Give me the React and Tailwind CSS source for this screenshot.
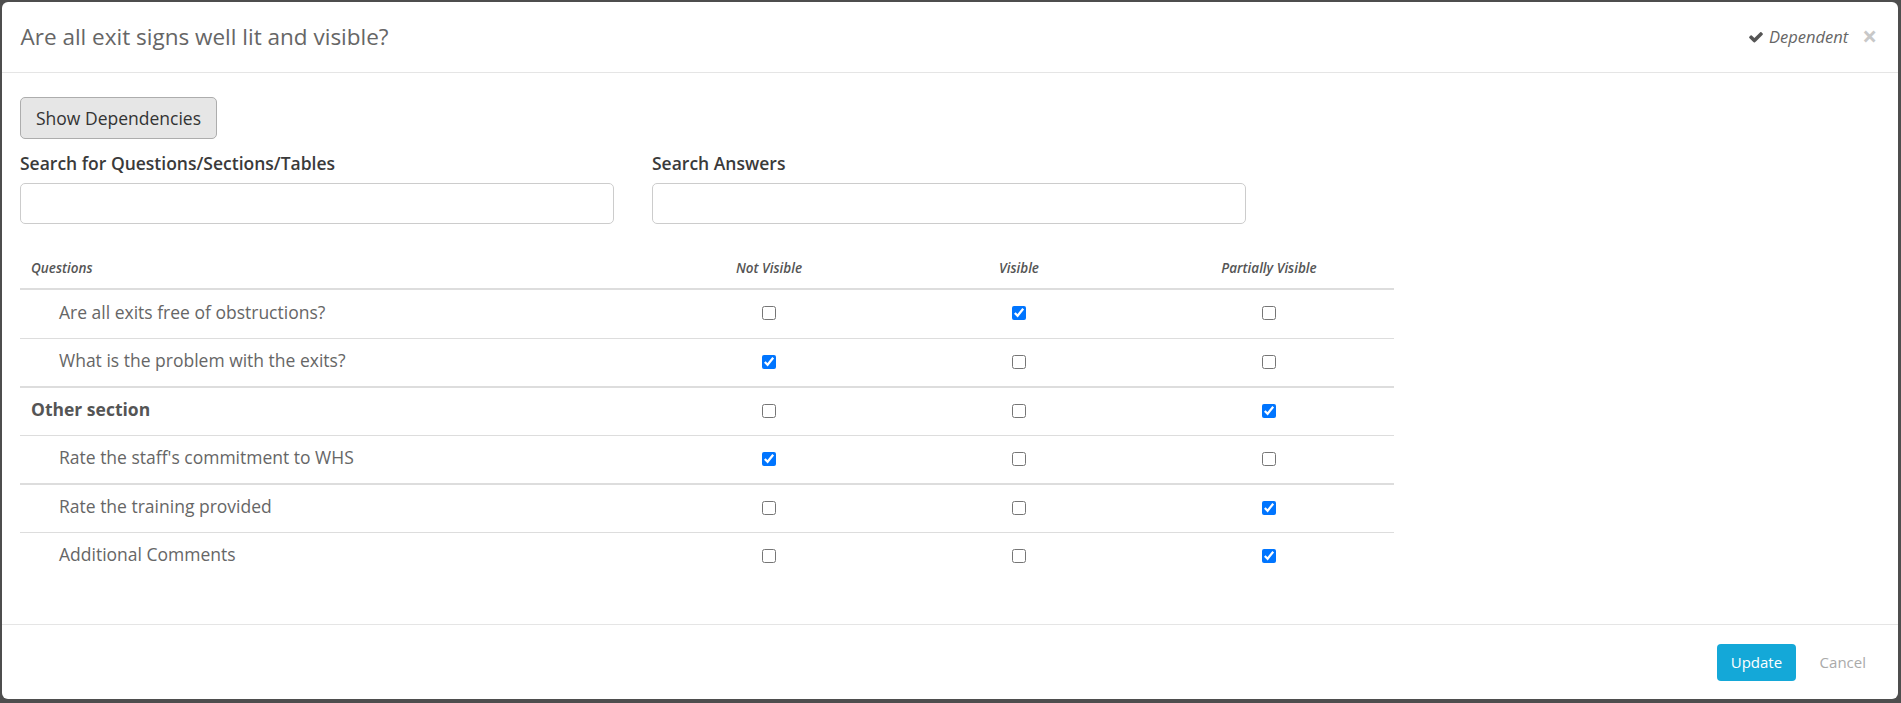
import React from "react";

const rows = [
  { label: "Are all exits free of obstructions?", indent: true, checks: [false, true, false], border: "none" },
  { label: "What is the problem with the exits?", indent: true, checks: [true, false, false], border: "thin" },
  { label: "Other section", indent: false, bold: true, checks: [false, false, true], border: "thick" },
  { label: "Rate the staff's commitment to WHS", indent: true, checks: [true, false, false], border: "thin" },
  { label: "Rate the training provided", indent: true, checks: [false, false, true], border: "thick" },
  { label: "Additional Comments", indent: true, checks: [false, false, true], border: "thin" },
];

function CheckIcon() {
  return (
    <svg width="16" height="16" viewBox="0 0 1792 1792" className="fill-[#555]">
      <path d="M1671 566q0 40-28 68l-724 724-136 136q-28 28-68 28t-68-28l-136-136-362-362q-28-28-28-68t28-68l136-136q28-28 68-28t68 28l294 295 656-657q28-28 68-28t68 28l136 136q28 28 28 68z" />
    </svg>
  );
}

function Box({ checked }) {
  return (
    <input
      type="checkbox"
      defaultChecked={checked}
      className="w-[14px] h-[14px] m-0 accent-[#0075ff]"
    />
  );
}

export default function App() {
  return (
    <div className="w-[1901px] h-[703px] bg-[#4e4e4e] pt-[2px] pl-[2px] pr-[3px] pb-[4px] font-['Open_Sans',sans-serif] overflow-hidden">
      <div className="h-full bg-white rounded-[6px] flex flex-col overflow-hidden">
        {/* Header */}
        <div className="h-[71px] shrink-0 border-b border-[#e5e5e5] flex items-center pl-[18.5px] pr-[21px]">
          <h4 className="text-[22.5px] leading-[32px] text-[#666]">Are all exit signs well lit and visible?</h4>
          <div className="ml-auto flex items-center">
            <CheckIcon />
            <span className="ml-[5px] text-[16.5px] italic text-[#666]">Dependent</span>
            <span className="ml-[14px] text-[26px] leading-none font-bold text-[#c8c8c8] -mt-[2px]">×</span>
          </div>
        </div>

        {/* Body */}
        <div className="flex-1 pl-[18px] pt-[24px]">
          <button className="h-[42px] px-[15px] bg-[#e6e6e6] border border-[#adadad] rounded-[5px] text-[17.5px] text-[#333] leading-[25px]">
            Show Dependencies
          </button>

          <div className="flex gap-[38px] mt-[12px]">
            <div className="w-[594px]">
              <div className="text-[17.5px] leading-[25px] font-semibold text-[#3a3a3a]">Search for Questions/Sections/Tables</div>
              <input className="mt-[7px] block w-full h-[41px] border border-[#ccc] rounded-[5px] bg-white" />
            </div>
            <div className="w-[594px]">
              <div className="text-[17.5px] leading-[25px] font-semibold text-[#3a3a3a]">Search Answers</div>
              <input className="mt-[7px] block w-full h-[41px] border border-[#ccc] rounded-[5px] bg-white" />
            </div>
          </div>

          {/* Table */}
          <div className="mt-[25px] w-[1374px]">
            <div className="grid grid-cols-[624px_250px_250px_250px] h-[41px] border-b-2 border-[#ddd] items-center text-[13.5px] italic font-semibold text-[#555]">
              <div className="pl-[11px]">Questions</div>
              <div className="text-center">Not Visible</div>
              <div className="text-center">Visible</div>
              <div className="text-center">Partially Visible</div>
            </div>
            {rows.map((r, i) => (
              <div
                key={i}
                className={
                  "grid grid-cols-[624px_250px_250px_250px] items-center text-[17.5px] " +
                  (r.border === "none"
                    ? "h-[48px]"
                    : r.border === "thin"
                    ? "h-[48px] border-t border-[#ddd]"
                    : "h-[49px] border-t-2 border-[#ddd]")
                }
              >
                <div
                  className={
                    r.indent
                      ? "pl-[39px] pb-[4px] text-[#666]"
                      : "pl-[11px] pb-[4px] font-bold text-[#555]"
                  }
                >
                  {r.label}
                </div>
                {r.checks.map((c, j) => (
                  <div key={j} className="flex justify-center items-center pb-[2px]">
                    <Box checked={c} />
                  </div>
                ))}
              </div>
            ))}
          </div>
        </div>

        {/* Footer */}
        <div className="h-[75px] shrink-0 border-t border-[#e5e5e5] flex items-center justify-end pr-[32px]">
          <button className="h-[37px] px-[13.5px] bg-[#14a8d8] rounded-[4px] text-white text-[15px]">Update</button>
          <button className="ml-[24px] text-[15px] text-[#aaa]">Cancel</button>
        </div>
      </div>
    </div>
  );
}
